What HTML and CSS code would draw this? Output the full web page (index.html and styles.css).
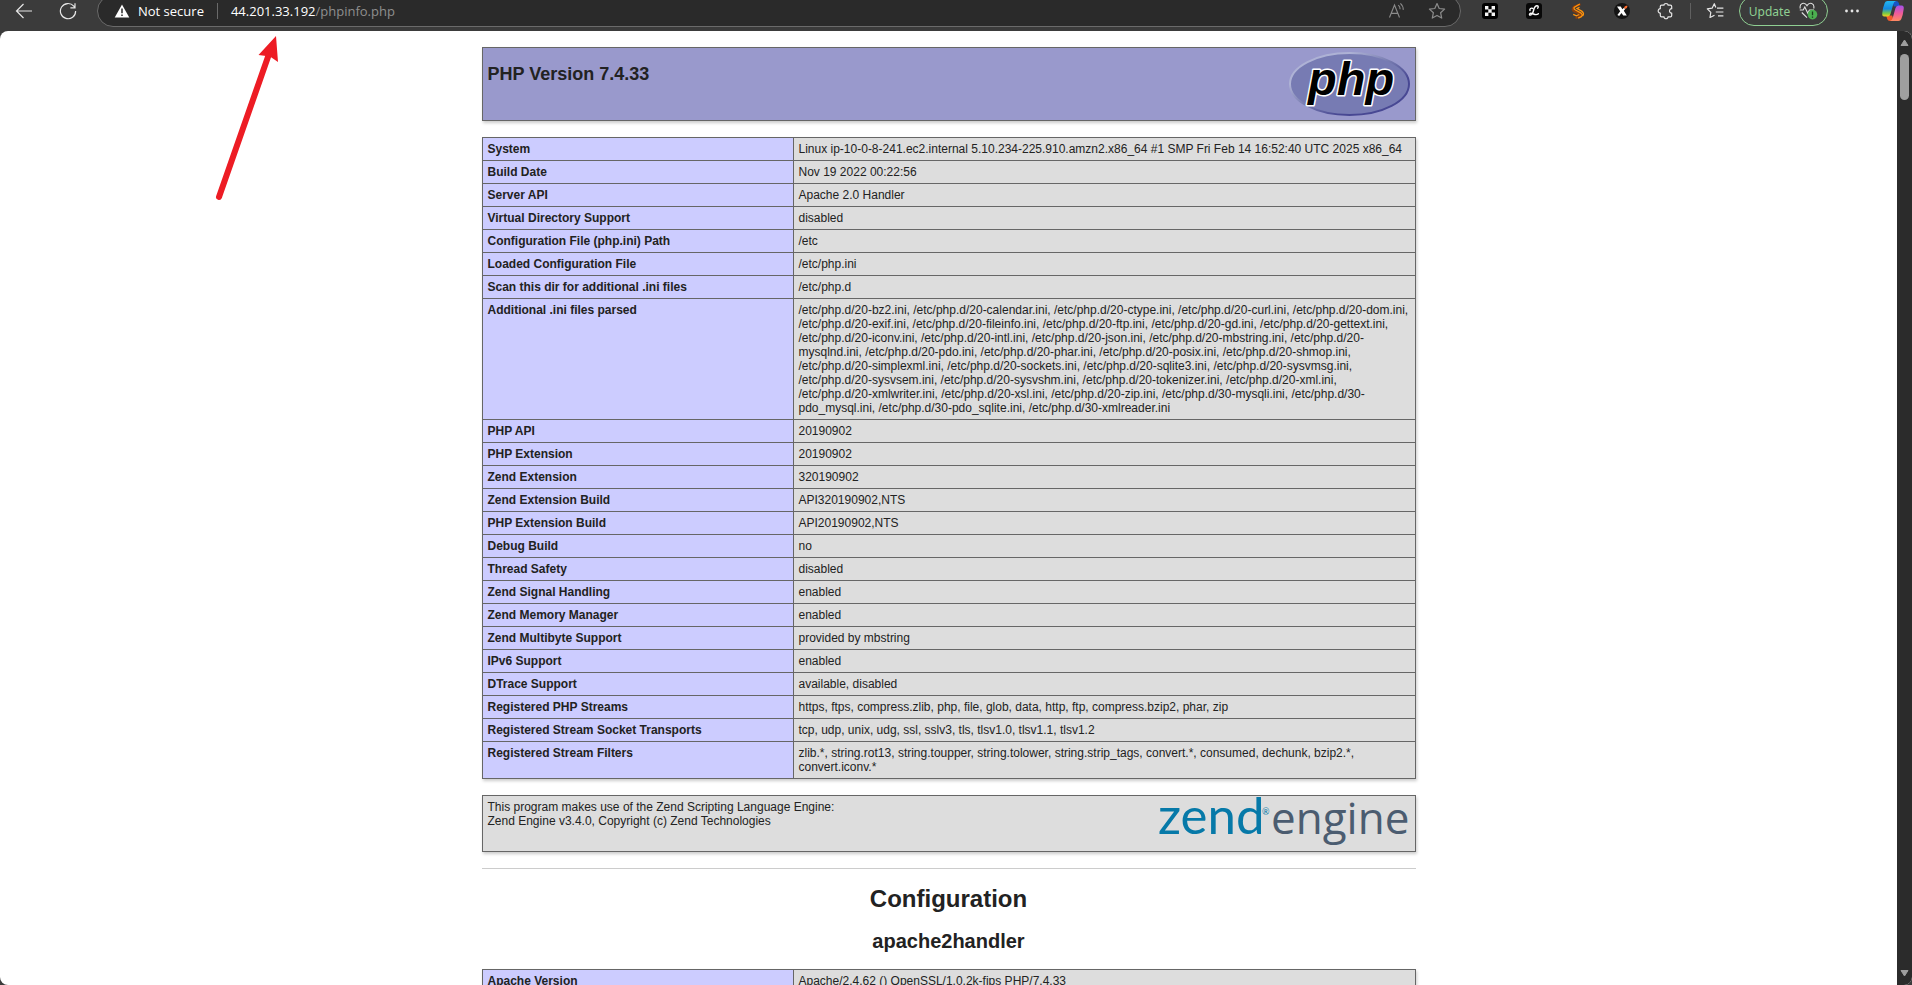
FILE: index.html
```html
<!DOCTYPE html>
<html lang="en">
<head>
<meta charset="utf-8">
<title>PHP 7.4.33 - phpinfo()</title>
<link rel="stylesheet" href="styles.css">
</head>
<body>
<header class="toolbar">
  <div class="toolbar-row">
    <button class="tool" aria-label="Back"><svg width="18" height="18" viewBox="0 0 18 18" fill="none" stroke="#e6e6e6" stroke-width="1.2"><path d="M17 9H1.5M8.5 2 1.5 9l7 7"/></svg></button>
    <button class="tool" aria-label="Refresh"><svg width="18" height="18" viewBox="0 0 18 18" fill="none" stroke="#e6e6e6" stroke-width="1.2"><path d="M16.6 9A7.6 7.6 0 1 1 14.8 4.2L16 5.6M16 1.2v4.6h-4.6"/></svg></button>
    <div class="address">
      <svg width="16" height="14" viewBox="0 0 16 14"><path d="M8 .5 15.3 13.5H.7z" fill="#fff"/><path d="M8 4.6v4.6M8 10.6v1.5" stroke="#2a2a2a" stroke-width="1.5"/></svg>
      <span class="security">Not secure</span>
      <span class="address-rule"></span>
      <span class="url"><b>44.201.33.192</b>/phpinfo.php</span>
      <button class="tool small" aria-label="Read aloud"><svg width="18" height="18" viewBox="0 0 18 18" fill="none" stroke="#8c8c8c" stroke-width="1.1"><path d="M1.5 15.5 6.5 3l5 12.5M3.2 11.4h6.6M10.3 3.2q1.9 1.6 1.8 4M12.4 1.3q3 2.6 2.8 6.6"/></svg></button>
      <button class="tool small" aria-label="Add to favorites"><svg width="18" height="18" viewBox="0 0 18 18" fill="none" stroke="#8c8c8c" stroke-width="1.2" stroke-linejoin="round"><path d="m9 1.6 2.2 4.9 5.4.6-4 3.6 1.1 5.4L9 13.4l-4.7 2.7 1.1-5.4-4-3.6 5.4-.6z"/></svg></button>
    </div>
    <div class="extensions">
      <button class="tool" aria-label="Extension X"><svg width="16" height="16" viewBox="0 0 16 16"><rect width="16" height="16" rx="3" fill="#000"/><path d="M3 3h3.4v3.2h3.2V3H13v3.4H9.7v3.2H13V13H9.6V9.8H6.4V13H3V9.6h3.3V6.4H3z" fill="#f4f4f4"/></svg></button>
      <button class="tool" aria-label="Extension L"><svg width="16" height="16" viewBox="0 0 16 16" fill="none"><rect width="16" height="16" rx="3" fill="#080808"/><path d="M11.7 5.2c1.5-2-.7-3.5-2.6-1.4-2 2.2-1.2 5.8-3.5 7.7-2.2 1.8-3-1-.8-1.2 2.6-.2 4.7 3 7.6.4M4 7.5c-.6-1.7 1.1-2.8 2.6-2.1" stroke="#fff" stroke-width="1.4" stroke-linecap="round"/></svg></button>
      <button class="tool" aria-label="Extension S"><svg width="16" height="16" viewBox="0 0 16 16" fill="none"><path d="M10.5 1.2 4 3.7q-3 3 .5 5l6 2.4q1.6 2-5 4" stroke="#8a3d0c" stroke-width="2"/><path d="M9.8 1 4.1 4.4Q3.5 6 5.3 7l5.8 3.1q2 1.9.2 3.6l-3.1 1.5M9.5 4.2 7 5.6l4.7 2.5q3 2.1 1 4.7M3.2 11.3l3.1 1.6 3-1.4" stroke="#ff930b" stroke-width="1.3"/></svg></button>
      <button class="tool" aria-label="Extension star"><svg width="16" height="16" viewBox="0 0 16 16"><circle cx="8" cy="8" r="8" fill="#141414"/><path d="M3 3.6h3.7l1.7 2.6 1.6-1.4 1.2 1.3-1.4 1.7 3 4.7H9.2L7.5 10l-2.3 3L3.4 12l2.8-3.7z" fill="#fff"/><path d="M10 4.5c.7-1.4 1.7-1.8 3.5-1.7-.2 1.9-1 2.8-2.5 3.3z" fill="#ff6c2d"/></svg></button>
      <button class="tool" aria-label="Extensions"><svg width="18" height="18" viewBox="0 0 18 18" fill="none" stroke="#e6e6e6" stroke-width="1.2" stroke-linejoin="round"><path d="M3.300 4.500q0-1.300 1.300-1.300H7C6.700.9 11.300.9 11 3.200h2.400q1.300 0 1.300 1.300v2.200C11.800 6.500 11.800 11.300 14.700 11.100v2.400q0 1.300-1.300 1.300H11c.3 2.600-4.300 2.600-4 0H4.600q-1.300 0-1.300-1.300v-2.400C.5 11.300.5 6.500 3.300 6.700z"/></svg></button>
    </div>
    <span class="toolbar-rule"></span>
    <button class="tool" aria-label="Favorites"><svg width="18" height="18" viewBox="0 0 18 18" fill="none" stroke="#e6e6e6" stroke-width="1.2" stroke-linejoin="round"><path d="M9.8 5.5 8.3 1.700 6.100 6.200l-4.800.7 3.500 3.500-.8 5.100 4.500-2.300M11 6.200h6.400M9.800 10h7.600M12 13.800h5.400"/></svg></button>
    <button class="update"><span>Update</span><svg width="20" height="18" viewBox="0 0 20 18" fill="none"><path d="M2.300 6.500C1 1 6.500-.5 9 3.600 11.500-.5 17 1 15.700 6.500M1.800 8h3.400l1.600-3 2.900 6 1.700-3H16M3.800 10.500 9 15.600" stroke="#e0e0e0" stroke-width="1.100"/><circle cx="14.500" cy="12.600" r="4.800" fill="#4caf50"/><path d="M14.500 9.500v3.800M14.500 14.500v1.300" stroke="#183b1a" stroke-width="1.300"/></svg></button>
    <button class="tool" aria-label="Settings and more"><svg width="16" height="4" viewBox="0 0 16 4" fill="#e6e6e6"><circle cx="2.500" cy="2" r="1.400"/><circle cx="8" cy="2" r="1.400"/><circle cx="13.500" cy="2" r="1.400"/></svg></button>
    <button class="tool copilot" aria-label="Copilot"><svg width="24" height="22" viewBox="0 0 24 22">
      <defs>
        <linearGradient id="cool" x1="0" y1="0" x2="0" y2="1"><stop offset="0" stop-color="#22b8f2"/><stop offset=".5" stop-color="#1689df"/><stop offset=".8" stop-color="#7ac943"/><stop offset="1" stop-color="#f5cf20"/></linearGradient>
        <linearGradient id="warm" x1="0" y1="0" x2="0" y2="1"><stop offset="0" stop-color="#a350ea"/><stop offset=".5" stop-color="#ef5b9b"/><stop offset="1" stop-color="#ff8a62"/></linearGradient>
      </defs>
      <path d="M11 1h4q2.200 0 2.800 2l1 3.500h-6z" fill="#1755c6"/>
      <path d="M13 21H9q-2.200 0-2.800-2l-1-3.500h6z" fill="#f05a2a"/>
      <path d="M6.500 1H15q-2 .5-2.700 3L9.500 14q-.8 2.500-3 2.500H3.300q-2.500 0-2-3.500Q2 7 3.700 3 4.500 1 6.500 1z" fill="url(#cool)"/>
      <path d="M17.500 21H9q2-.5 2.700-3l2.800-10q.8-2.500 3-2.500h3.200q2.500 0 2 3.500-.7 6-2.400 10-.8 2-2.800 2z" fill="url(#warm)"/>
    </svg></button>
  </div>
</header>

<div class="viewport">
  <main class="page">
    <table class="info">
      <tr class="h"><td>
        <div class="banner">
          <h1 class="version">PHP Version 7.4.33</h1>
          <svg class="logo" width="121" height="64" viewBox="0 0 121 64" role="img" aria-label="PHP logo">
            <defs>
              <linearGradient id="rim" x1="0" y1="0" x2="1" y2="1"><stop offset=".25" stop-color="#aeb2d5"/><stop offset=".5" stop-color="#7377ad"/><stop offset=".7" stop-color="#484893"/></linearGradient>
            </defs>
            <ellipse cx="60.500" cy="32" rx="59.500" ry="31" fill="#777bb3" stroke="url(#rim)" stroke-width="2"/>
            <text class="php-word" x="19" y="43">php</text>
          </svg>
        </div>
      </td></tr>
    </table>

    <table class="info">
      <tr><th class="e" scope="row">System</th><td class="v">Linux ip-10-0-8-241.ec2.internal 5.10.234-225.910.amzn2.x86_64 #1 SMP Fri Feb 14 16:52:40 UTC 2025 x86_64</td></tr>
      <tr><th class="e" scope="row">Build Date</th><td class="v">Nov 19 2022 00:22:56</td></tr>
      <tr><th class="e" scope="row">Server API</th><td class="v">Apache 2.0 Handler</td></tr>
      <tr><th class="e" scope="row">Virtual Directory Support</th><td class="v">disabled</td></tr>
      <tr><th class="e" scope="row">Configuration File (php.ini) Path</th><td class="v">/etc</td></tr>
      <tr><th class="e" scope="row">Loaded Configuration File</th><td class="v">/etc/php.ini</td></tr>
      <tr><th class="e" scope="row">Scan this dir for additional .ini files</th><td class="v">/etc/php.d</td></tr>
      <tr><th class="e" scope="row">Additional .ini files parsed</th><td class="v">/etc/php.d/20-bz2.ini, /etc/php.d/20-calendar.ini, /etc/php.d/20-ctype.ini, /etc/php.d/20-curl.ini, /etc/php.d/20-dom.ini, /etc/php.d/20-exif.ini, /etc/php.d/20-fileinfo.ini, /etc/php.d/20-ftp.ini, /etc/php.d/20-gd.ini, /etc/php.d/20-gettext.ini, /etc/php.d/20-iconv.ini, /etc/php.d/20-intl.ini, /etc/php.d/20-json.ini, /etc/php.d/20-mbstring.ini, /etc/php.d/20-mysqlnd.ini, /etc/php.d/20-pdo.ini, /etc/php.d/20-phar.ini, /etc/php.d/20-posix.ini, /etc/php.d/20-shmop.ini, /etc/php.d/20-simplexml.ini, /etc/php.d/20-sockets.ini, /etc/php.d/20-sqlite3.ini, /etc/php.d/20-sysvmsg.ini, /etc/php.d/20-sysvsem.ini, /etc/php.d/20-sysvshm.ini, /etc/php.d/20-tokenizer.ini, /etc/php.d/20-xml.ini, /etc/php.d/20-xmlwriter.ini, /etc/php.d/20-xsl.ini, /etc/php.d/20-zip.ini, /etc/php.d/30-mysqli.ini, /etc/php.d/30-pdo_mysql.ini, /etc/php.d/30-pdo_sqlite.ini, /etc/php.d/30-xmlreader.ini</td></tr>
      <tr><th class="e" scope="row">PHP API</th><td class="v">20190902</td></tr>
      <tr><th class="e" scope="row">PHP Extension</th><td class="v">20190902</td></tr>
      <tr><th class="e" scope="row">Zend Extension</th><td class="v">320190902</td></tr>
      <tr><th class="e" scope="row">Zend Extension Build</th><td class="v">API320190902,NTS</td></tr>
      <tr><th class="e" scope="row">PHP Extension Build</th><td class="v">API20190902,NTS</td></tr>
      <tr><th class="e" scope="row">Debug Build</th><td class="v">no</td></tr>
      <tr><th class="e" scope="row">Thread Safety</th><td class="v">disabled</td></tr>
      <tr><th class="e" scope="row">Zend Signal Handling</th><td class="v">enabled</td></tr>
      <tr><th class="e" scope="row">Zend Memory Manager</th><td class="v">enabled</td></tr>
      <tr><th class="e" scope="row">Zend Multibyte Support</th><td class="v">provided by mbstring</td></tr>
      <tr><th class="e" scope="row">IPv6 Support</th><td class="v">enabled</td></tr>
      <tr><th class="e" scope="row">DTrace Support</th><td class="v">available, disabled</td></tr>
      <tr><th class="e" scope="row">Registered PHP Streams</th><td class="v">https, ftps, compress.zlib, php, file, glob, data, http, ftp, compress.bzip2, phar, zip</td></tr>
      <tr><th class="e" scope="row">Registered Stream Socket Transports</th><td class="v">tcp, udp, unix, udg, ssl, sslv3, tls, tlsv1.0, tlsv1.1, tlsv1.2</td></tr>
      <tr><th class="e" scope="row">Registered Stream Filters</th><td class="v">zlib.*, string.rot13, string.toupper, string.tolower, string.strip_tags, convert.*, consumed, dechunk, bzip2.*, convert.iconv.*</td></tr>
    </table>

    <table class="info">
      <tr><td class="v">
        <div class="banner">
          <p class="credit">This program makes use of the Zend Scripting Language Engine:<br>Zend Engine v3.4.0, Copyright (c) Zend Technologies</p>
          <svg class="logo" width="253" height="47" viewBox="0 0 253 47" role="img" aria-label="Zend engine logo">
            <text class="zend-word" x="1" y="34">zend</text>
            <text class="zend-mark" x="105" y="15">®</text>
            <text class="engine-word" x="114" y="34">engine</text>
          </svg>
        </div>
      </td></tr>
    </table>

    <hr class="rule">
    <h1 class="title">Configuration</h1>
    <h2 class="subtitle">apache2handler</h2>
    <table class="info">
      <tr><th class="e" scope="row">Apache Version</th><td class="v">Apache/2.4.62 () OpenSSL/1.0.2k-fips PHP/7.4.33</td></tr>
    </table>
  </main>
  <div class="scrollbar">
    <svg width="9" height="8" viewBox="0 0 9 8"><path d="M4.500 1 8 6.500H1z" fill="#9f9f9f" stroke="#9f9f9f" stroke-linejoin="round"/></svg>
    <span class="thumb"></span>
    <svg width="9" height="8" viewBox="0 0 9 8"><path d="M4.500 7 8 1.500H1z" fill="#9f9f9f" stroke="#9f9f9f" stroke-linejoin="round"/></svg>
  </div>
</div>

<svg class="pointer" width="70" height="170" viewBox="0 0 70 170" aria-hidden="true">
  <path d="M9 162 59 19" stroke="#ed1c24" stroke-width="6" stroke-linecap="round"/>
  <path d="M66 1 48.500 20 60 21.500 68 27z" fill="#ed1c24"/>
</svg>
</body>
</html>
```

FILE: styles.css
```css
* { box-sizing: border-box; }

body {
  margin: 0;
  height: 100vh;
  display: flex;
  flex-direction: column;
  overflow: hidden;
  background: #3b3b3b;
  color: #222;
  font-family: "Liberation Sans", Arial, sans-serif;
}

button {
  margin: 0;
  padding: 0;
  border: 0;
  background: none;
  font: inherit;
  color: inherit;
}

/* Browser toolbar */
.toolbar {
  flex: none;
  height: 31px;
  display: flex;
  align-items: flex-end;
  overflow: hidden;
  font-family: "Open Sans", "Noto Sans", sans-serif;
  font-size: 13px;
}

.toolbar-row {
  flex: 1;
  height: 40px;
  display: flex;
  align-items: center;
  padding-left: 2px;
}

.tool {
  width: 44px;
  height: 32px;
  display: flex;
  align-items: center;
  justify-content: center;
}

.tool.small { width: 40px; }
.tool.copilot { width: 38px; }

.address {
  flex: 1;
  height: 32px;
  margin: 0 7px;
  padding-left: 16px;
  padding-right: 3px;
  display: flex;
  align-items: center;
  border: 1px solid #6a6a6a;
  border-radius: 16px;
  background: #2a2a2a;
}

.security {
  margin-left: 8px;
  color: #fff;
}

.address-rule {
  width: 1px;
  height: 16px;
  margin: 0 13px;
  background: #6a6a6a;
}

.url {
  flex: 1;
  color: #8f8f8f;
}

.url b {
  font-weight: 400;
  color: #fff;
}

.extensions { display: flex; }

.toolbar-rule {
  width: 1px;
  height: 16px;
  margin: 0 2px;
  background: #606060;
}

.update {
  width: 89px;
  height: 30px;
  margin: 0 2px;
  display: flex;
  align-items: center;
  justify-content: center;
  gap: 8px;
  border: 1px solid #8fcf92;
  border-radius: 15px;
  color: #8fcf92;
  font-size: 12px;
  font-family: "Noto Sans", sans-serif;
}

/* Page area */
.viewport {
  flex: 1;
  min-height: 0;
  display: flex;
  overflow: hidden;
  border-radius: 8px;
  background: #fff;
}

.page {
  flex: 1;
  padding: 16px 0;
  display: flex;
  flex-direction: column;
  align-items: center;
  overflow: hidden;
}

.info {
  flex: none;
  width: 934px;
  max-width: 100%;
  margin-bottom: 16px;
  border-collapse: collapse;
  box-shadow: 1px 2px 3px #ccc;
  text-align: left;
}

.info td,
.info th {
  padding: 4px 5px;
  border: 1px solid #666;
  font-size: 12px;
  line-height: 14px;
  vertical-align: baseline;
}

.info .e {
  width: 311px;
  background: #ccf;
  font-weight: 700;
}

.info .v { background: #ddd; }
.h { background: #99c; }

.banner {
  display: flex;
  justify-content: space-between;
  align-items: flex-start;
}

.logo { overflow: visible; }

.version {
  margin: 12px 0;
  font-size: 18px;
  line-height: 21px;
}

.credit { margin: 0; }

.php-word {
  font: italic 700 47px "Liberation Sans", Arial, sans-serif;
  fill: #000;
  stroke: #fff;
  stroke-width: 3px;
  stroke-linejoin: round;
  paint-order: stroke;
}

.zend-word {
  font: 400 51px Lato, sans-serif;
  fill: #0679a8;
}

.zend-mark {
  font: 400 9px Lato, sans-serif;
  fill: #0679a8;
}

.engine-word {
  font: 400 44px "Open Sans", sans-serif;
  fill: #4b5c70;
}

.rule {
  flex: none;
  width: 934px;
  max-width: 100%;
  height: 1px;
  margin: 0 0 16px;
  border: 0;
  background: #ccc;
}

.title {
  margin: 0 0 17px;
  font-size: 24px;
  line-height: 28px;
}

.subtitle {
  margin: 0 0 16px;
  font-size: 20px;
  line-height: 23px;
}

.scrollbar {
  flex: none;
  width: 15px;
  padding: 8px 0;
  display: flex;
  flex-direction: column;
  align-items: center;
  background: #2b2b2b;
}

.thumb {
  width: 9px;
  height: 46px;
  margin: 7px 0 auto;
  border-radius: 5px;
  background: #9f9f9f;
}

/* Annotation lying over the page */
.pointer {
  position: absolute;
  left: 210px;
  top: 35px;
  fill: none;
}
```
